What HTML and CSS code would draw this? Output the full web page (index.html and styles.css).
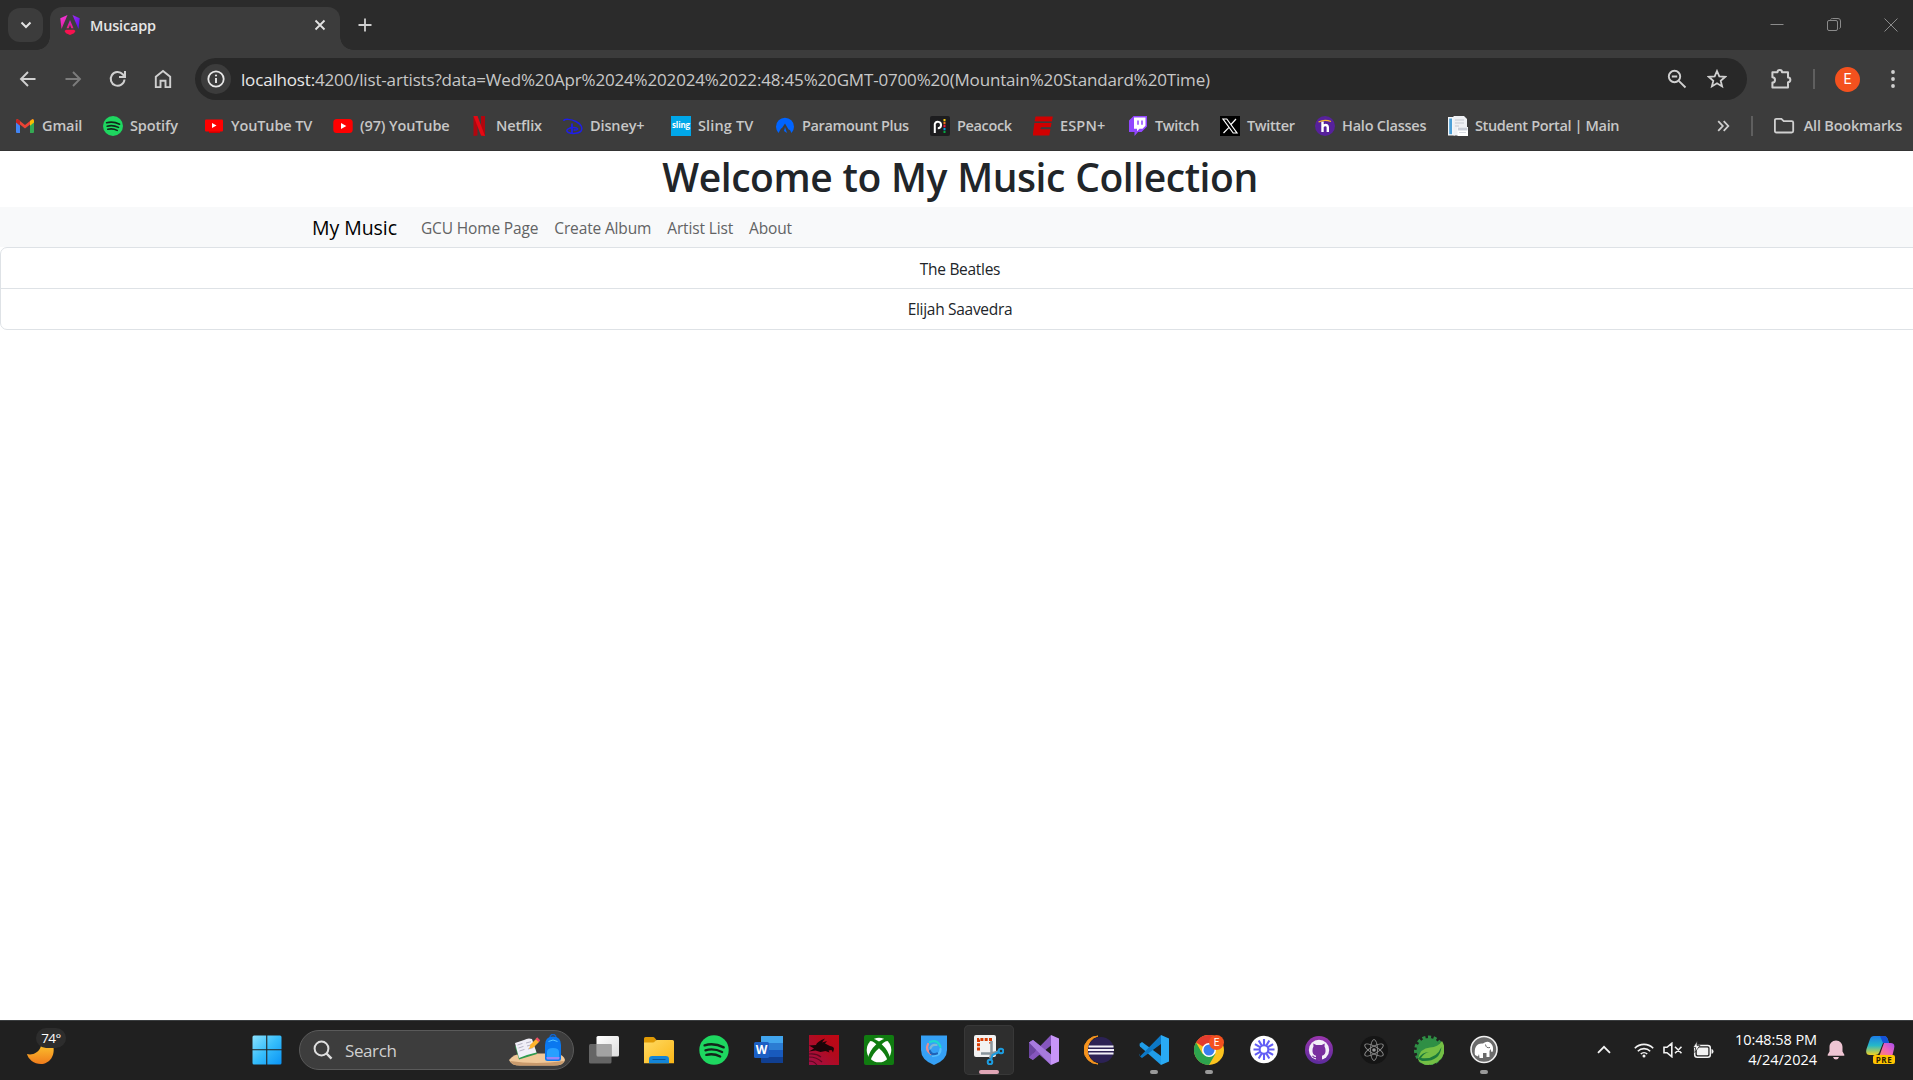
FILE: index.html
```html
<!DOCTYPE html>
<html lang="en">
<head>
<meta charset="utf-8">
<title>Musicapp</title>
<link rel="stylesheet" href="styles.css">
</head>
<body>
<div class="screen">
  <header class="browser">
    <div class="tab-strip">
      <div class="tab-search"><svg width="12" height="8" viewBox="0 0 12 8"><path d="M1.500 1.500 6 6l4.500-4.500" fill="none" stroke="#e3e3e3" stroke-width="2"/></svg></div>
      <div class="tab">
        <svg class="tab-icon" width="20" height="20" viewBox="0 0 20 20">
          <defs>
            <linearGradient id="ngL" x1="0" y1="0" x2="0.300" y2="1"><stop offset="0" stop-color="#f637e3"/><stop offset="1" stop-color="#e01f9b"/></linearGradient>
            <linearGradient id="ngR" x1="0" y1="0" x2="0.600" y2="1"><stop offset="0" stop-color="#a32cf0"/><stop offset="1" stop-color="#5c10f0"/></linearGradient>
            <linearGradient id="ngA" x1="0" y1="0" x2="0" y2="1"><stop offset="0" stop-color="#c31fd0"/><stop offset="1" stop-color="#f02080"/></linearGradient>
          </defs>
          <path d="M7.500 0 0.300 3.200 1.500 14 7.500 0Z" fill="url(#ngL)"/>
          <path d="M12.500 0 19.700 3.200 18.500 14Z" fill="url(#ngR)"/>
          <path d="M10 5 6.500 13.200H8.700L10 9.800 11.300 13.200H13.500Z" fill="url(#ngA)"/>
          <path d="M4.500 16 6 14.700H14L15.500 16 14 18.200 10 20 6 18.200Z" fill="#f8124f"/>
        </svg>
        <span class="tab-title">Musicapp</span>
        <svg width="12" height="12" viewBox="0 0 12 12"><path d="m1.500 1.500 9 9m0-9-9 9" stroke="#e3e3e3" stroke-width="1.800"/></svg>
      </div>
      <svg class="new-tab" width="14" height="14" viewBox="0 0 14 14"><path d="M7 .5v13M.5 7h13" stroke="#d0d0d0" stroke-width="1.800"/></svg>
      <div class="window-buttons">
        <svg width="14" height="14" viewBox="0 0 14 14"><path d="M.5 6.500h13" stroke="#8b8b8b"/></svg>
        <svg width="14" height="14" viewBox="0 0 14 14" fill="none" stroke="#8b8b8b"><rect x=".5" y="2.500" width="10" height="10" rx="1.500"/><path d="M3.500 1.500Q4 .5 5.500.5H11q2.500 0 2.500 2.500v6q0 1-1 1.500"/></svg>
        <svg width="14" height="14" viewBox="0 0 14 14"><path d="m.5.5 13 13m0-13-13 13" stroke="#8b8b8b"/></svg>
      </div>
    </div>

    <div class="toolbar">
      <div class="nav-buttons">
        <svg width="20" height="20" viewBox="0 0 20 20" fill="none" stroke="#d0d0d0" stroke-width="1.900"><path d="M17.500 10H3.500M10 3 3 10l7 7"/></svg>
        <svg width="20" height="20" viewBox="0 0 20 20" fill="none" stroke="#7c7c7c" stroke-width="1.900"><path d="M2.500 10h14M10 3l7 7-7 7"/></svg>
        <svg width="20" height="20" viewBox="0 0 20 20" fill="none" stroke="#d0d0d0" stroke-width="2"><path d="M16.500 10.500a6.900 6.900 0 1 1-1.800-5.300L16.800 7.500"/><path d="M17 2v6h-6"/></svg>
        <svg width="20" height="20" viewBox="0 0 20 20" fill="none" stroke="#d0d0d0" stroke-width="1.900"><path d="M2.800 7.700 10 1.900l7.200 5.800v10.400h-4.700v-6.300h-5v6.300H2.800Z"/></svg>
      </div>
      <div class="omnibox">
        <span class="site-info"><svg width="18" height="18" viewBox="0 0 18 18"><circle cx="9" cy="9" r="7.700" fill="none" stroke="#e8e8e8" stroke-width="1.800"/><path d="M9 8v5" stroke="#e8e8e8" stroke-width="1.900"/><circle cx="9" cy="5.500" r="1.100" fill="#e8e8e8"/></svg></span>
        <span class="url"><b>localhost:</b>4200/list-artists?data=Wed%20Apr%2024%202024%2022:48:45%20GMT-0700%20(Mountain%20Standard%20Time)</span>
        <svg class="zoom-out" width="20" height="20" viewBox="0 0 20 20" fill="none" stroke="#d0d0d0" stroke-width="1.900"><circle cx="7.500" cy="7.500" r="5.700"/><path d="m11.800 11.800 6.700 6.700M4.800 7.500h5.400"/></svg>
        <svg width="20" height="20" viewBox="0 0 20 20"><path d="m10 2 2.300 5.300 5.900.5-4.500 3.900 1.400 5.700-5.100-3.100-5.100 3.100 1.400-5.700-4.500-3.900 5.900-.5Z" fill="none" stroke="#d0d0d0" stroke-width="1.800"/></svg>
      </div>
      <svg class="extensions" width="22" height="22" viewBox="0 0 22 22"><path d="M2.400 4.200H7.500a2.200 2.200 0 0 1 4.500 0h6v5.300a2.300 2.300 0 0 1 0 4.700v5.400H2.400v-5.100a2.600 2.600 0 0 0 0-5.200Z" fill="none" stroke="#d0d0d0" stroke-width="2" stroke-linejoin="round"/></svg>
      <span class="divider"></span>
      <span class="avatar">E</span>
      <svg class="menu-dots" width="4" height="18" viewBox="0 0 4 18" fill="#d0d0d0"><circle cx="2" cy="2" r="1.900"/><circle cx="2" cy="9" r="1.900"/><circle cx="2" cy="16" r="1.900"/></svg>
    </div>

    <div class="bookmarks">
      <div class="bookmark-list">
        <div class="bookmark"><svg width="20" height="20" viewBox="0 0 20 20"><path d="M1 4v12q0 1 1 1h3V8Z" fill="#4285f4"/><path d="M19 4v12q0 1-1 1h-3V8Z" fill="#34a853"/><path d="M1 4.500Q1 3 2.500 3L10 9l7.500-6Q19 3 19 4.500L15 8.500l-5 4-5-4Z" fill="#ea4335"/><path d="M15 5 17.300 3.200Q19 3 19 5v1.500l-4 3.200Z" fill="#fbbc04"/><path d="M1 5q0-2 1.700-1.800L5 5v4.700L1 6.500Z" fill="#c5221f"/></svg><span>Gmail</span></div>
        <div class="bookmark"><svg width="20" height="20" viewBox="0 0 20 20"><use href="#spotify"/></svg><span>Spotify</span></div>
        <div class="bookmark"><svg width="20" height="20" viewBox="0 0 20 20"><path d="M5 15h11v2H5z" fill="#c00"/><rect x="1" y="3.500" width="18" height="12" rx="1" fill="#f00"/><path d="m8 7 4.500 2.500L8 12Z" fill="#fff"/></svg><span>YouTube TV</span></div>
        <div class="bookmark"><svg width="20" height="20" viewBox="0 0 20 20"><rect x=".3" y="3" width="19.400" height="14" rx="3.500" fill="#f00"/><path d="m8 7 5.300 3L8 13Z" fill="#fff"/></svg><span>(97) YouTube</span></div>
        <div class="bookmark"><svg width="20" height="20" viewBox="0 0 20 20"><path d="M4.500 0h4v19.500l-4 .5ZM12 0h4v20l-4-.5Z" fill="#b1060f"/><path d="M4.500 0h4L16 20l-4-.5Z" fill="#e50914"/></svg><span>Netflix</span></div>
        <div class="bookmark"><svg width="20" height="20" viewBox="0 0 20 20" fill="none" stroke="#1f1ee8" stroke-width="1.500"><path d="M.8 5C1 2.500 8 3 13 5.500c5 2.400 7 6.500 5 9.500-2 2.800-9 3-12.500 1.500-4-2 0-5 5-5 3 0 4.500 1 4 1.700-.7 1-4 .8-4 .8"/><path d="M9 7.500v10" stroke-width="1.800"/></svg><span>Disney+</span></div>
        <div class="bookmark"><span class="sling-icon">sling</span><span class="wide">Sling TV</span></div>
        <div class="bookmark"><svg width="20" height="20" viewBox="0 0 20 20"><path d="M3.500 17A9 9 0 1 1 16.500 17L15 14l-1.500-.5L10 7.500 7 12l-1 .5Z" fill="#0064ff"/><path d="m10 11 2 6-3-2Z" fill="#0064ff"/></svg><span class="tight">Paramount Plus</span></div>
        <div class="bookmark"><svg width="20" height="20" viewBox="0 0 20 20"><rect width="20" height="20" rx="2" fill="#1d1d1f"/><path d="M4.800 17V8a3.200 3.200 0 1 1 3 4.200" fill="none" stroke="#fff" stroke-width="2"/><path d="M13.500 3h2v2.300h-2z" fill="#fccc12"/><path d="M13.500 6h2v2.300h-2z" fill="#f37021"/><path d="M13.500 9h2v2.300h-2z" fill="#ef1541"/><path d="M13.500 12h2v2.300h-2z" fill="#069de0"/><path d="M13.500 15h2v2h-2z" fill="#05ac3f"/></svg><span class="tight">Peacock</span></div>
        <div class="bookmark"><svg width="20" height="20" viewBox="0 0 20 20" fill="#d00000"><path d="M2.500.5h17.300L18.900 5.500H1.600ZM1.400 7H18.500l-.7 4.200H8.200l-.3 2H17.400L16.300 19.500H-.3Z"/><path d="M1 6.300h18M7.500 12.400H18" stroke="#3c3c3c" stroke-width="1.300"/></svg><span class="wide">ESPN+</span></div>
        <div class="bookmark"><svg width="20" height="20" viewBox="0 0 20 20"><path d="M5.500 0H19v10.500L13.500 16H10l-3.500 4v-4H1V4.500Z" fill="#9146ff"/><path d="M6 1.500h11.500v8.300l-3 3h-3L9 15.300v-2.500H6Z" fill="#fff"/><path d="M10 4.500v4.300M14 4.500v4.300" stroke="#9146ff" stroke-width="1.500"/></svg><span class="tight">Twitch</span></div>
        <div class="bookmark"><svg width="20" height="20" viewBox="0 0 20 20"><path d="M0 0h20v20H0z" fill="#000"/><path d="M3 3h3.800L17 17h-3.800ZM16 3l-5.500 6M9 11.300 3.500 17" fill="none" stroke="#fff" stroke-width="1.200"/></svg><span class="tight">Twitter</span></div>
        <div class="bookmark"><svg width="20" height="20" viewBox="0 0 20 20"><circle cx="10" cy="10" r="10" fill="#57219c"/><path d="M7.500 5.500V16M7.500 11q1-2 3-2t2.300 2.200V16" fill="none" stroke="#fff" stroke-width="2.400"/><path d="M3.500 6Q9.500 3 16 5.500" fill="none" stroke="#f5b82e" stroke-width="1.300"/></svg><span class="snug">Halo Classes</span></div>
        <div class="bookmark"><svg width="20" height="20" viewBox="0 0 20 20"><path d="M0 1h7v18.500H0Z" fill="#f4f6f8"/><path d="M1.200 2.500H4v15.700H1.200Z" fill="#4c9fd6"/><path d="M5.500 0H16l3 3v16.500H5.500Z" fill="#eef0f4"/><path d="M7 4h9M7 7h9M7 10h4" stroke="#c4c8d0" stroke-width="1"/><path d="M9.500 11H20v9H9.500Z" fill="#fff"/><path d="M10 11.500h9.500v3H10Z" fill="#c9ced8"/><path d="M11 16.500h7" stroke="#d8dbe2"/></svg><span class="tight">Student Portal | Main</span></div>
      </div>
      <svg class="overflow" width="13" height="12" viewBox="0 0 13 12"><path d="m1.200 1.200 4.600 4.800-4.600 4.800m5.500-9.600L11.300 6l-4.600 4.800" fill="none" stroke="#d0d0d0" stroke-width="1.800"/></svg>
      <span class="divider"></span>
      <div class="bookmark all"><svg width="22" height="20" viewBox="0 0 22 20"><path d="M1.900 4.300q0-1.500 1.500-1.500h5l2.300 2.300h8q1.500 0 1.500 1.500V15q0 1.500-1.500 1.500H3.400Q1.900 16.500 1.900 15Z" fill="none" stroke="#d0d0d0" stroke-width="1.800"/></svg><span>All Bookmarks</span></div>
    </div>
  </header>

  <main class="page">
    <h1>Welcome to My Music Collection</h1>
    <nav class="navbar">
      <a class="brand">My Music</a>
      <a class="nav-link">GCU Home Page</a>
      <a class="nav-link">Create Album</a>
      <a class="nav-link">Artist List</a>
      <a class="nav-link">About</a>
    </nav>
    <ul class="artists">
      <li>The Beatles</li>
      <li>Elijah Saavedra</li>
    </ul>
  </main>

  <footer class="taskbar">
    <div class="weather">
      <svg width="30" height="30" viewBox="0 0 30 30"><defs><linearGradient id="moon" x1="0" y1="0" x2="0" y2="1"><stop offset="0" stop-color="#fbc02d"/><stop offset="1" stop-color="#f07c1c"/></linearGradient></defs><path d="M1 17c5 1.500 12-1 14-8l12-1c3 11-4 19-12 19C8 27 2 22 1 17Z" fill="url(#moon)"/></svg>
      <span class="temp">74°</span>
    </div>
    <div class="apps">
      <svg class="start" width="30" height="30" viewBox="0 0 30 30"><defs><linearGradient id="win" x1="0" y1="0" x2="1" y2="1"><stop offset="0" stop-color="#8be2ff"/><stop offset=".5" stop-color="#35bdfb"/><stop offset="1" stop-color="#0a93f5"/></linearGradient></defs><path d="M2 .5h12.200v13.700H.5V2Q.5.500 2 .5ZM15.300.5H28q1.500 0 1.500 1.500v12.200H15.300ZM.5 15.300h13.700v14.200H2Q.5 29.500.5 28ZM15.300 15.300h14.200V28q0 1.500-1.500 1.500H15.300Z" fill="url(#win)"/></svg>
      <div class="search">
        <svg width="20" height="20" viewBox="0 0 20 20" fill="none" stroke="#dedede" stroke-width="2"><circle cx="8.500" cy="8.500" r="6.900"/><path d="m13.500 13.500 5 5.200" stroke-width="2.400"/></svg>
        <span>Search</span>
        <svg class="search-art" width="58" height="32" viewBox="0 0 58 32"><path d="M1 26Q6 19.500 15 19.500H49Q56 21 57 26 56 31.500 46 31.500H12Q3 31.500 1 26Z" fill="#f0c899"/><path d="M2 27q26 4 54 0-2 4.500-10 4.500H12Q4 31.500 2 27Z" fill="#c99a6c"/><path d="m7 12 4 13.500 18-5.500-1.500-5Z" fill="#2e9b4f"/><path d="m7 9 9-3 3 15-8 3ZM16 6q4-2.500 8-1l4.500 13.500-9.500 2.500Z" fill="#f1eff8"/><path d="m9.500 11 5-1.600m-4 4.600 5-1.600m-4 4.600 5-1.600M18 9l5-1.300M19 12l5-1.300M20 15l5-1.300" stroke="#b5b3c4"/><path d="m21 15 1.500-4.500 6-6 3 3-6 6Z" fill="#ffb42e"/><path d="m27.500 5 1.700-1.700 3 3-1.700 1.700Z" fill="#ef4f67"/><path d="M42 4q0-3.500 3-3.500T48 4" fill="none" stroke="#1262c9" stroke-width="1.500"/><path d="M37 11q0-8.500 8-8.500t8 8.500v14q0 2-2.500 2h-11q-2.500 0-2.500-2Z" fill="#0a78f0"/><path d="M39 18q0-4 6-4t6 4v5H39Z" fill="#27a0ff"/><path d="M38.500 23h13v1q0 1.500-1.500 1.500H40q-1.500 0-1.500-1.500Z" fill="#9a86f6"/><path d="M40.500 7.500q4.500-3 9 0" fill="none" stroke="#55c4ff"/></svg>
      </div>

      <div class="app"><svg viewBox="0 0 30 30"><defs><linearGradient id="tv" x1="0" y1="0" x2="1" y2="1"><stop offset="0" stop-color="#fff"/><stop offset="1" stop-color="#dcdcdc"/></linearGradient></defs><rect x="7.500" y="1" width="22.500" height="20.500" rx="1.500" fill="url(#tv)"/><rect x="0" y="9" width="22.500" height="19.500" rx="1.500" fill="#6d6d6d" fill-opacity=".9"/><path d="M7.500 9h15v12.500H9q-1.500 0-1.500-1.500Z" fill="#a3a3a3"/></svg></div>
      <div class="app"><svg viewBox="0 0 30 30"><defs><linearGradient id="fold" x1="0" y1="0" x2="1" y2="1"><stop offset="0" stop-color="#ffda63"/><stop offset="1" stop-color="#fbb616"/></linearGradient></defs><path d="M0 3.500Q0 2 1.500 2H9q1 0 2 1.200L12.500 5 10 8H0Z" fill="#e09a05"/><path d="M0 7.500h9q1 0 2-1.200T13 5h15.500Q30 5 30 6.500V28.300H0Z" fill="url(#fold)"/><path d="M5 28.300v-4q0-3.300 3.300-3.300h13.400q3.300 0 3.300 3.300v4Z" fill="#1385d8"/><path d="M8.500 24.500h13" stroke="#0a5596"/></svg></div>
      <div class="app"><svg viewBox="0 0 30 30"><g transform="translate(.3 .3) scale(1.470)"><g id="spotify"><circle cx="10" cy="10" r="10" fill="#1ed760"/><path d="M3.600 6.800q6.400-1.900 13 1.400M4.200 10.200q5.700-1.600 11.300 1.200M4.800 13.300q5-1.200 9.400 1.100" fill="none" stroke="#12261a" stroke-width="1.600" stroke-linecap="round"/></g></g></svg></div>
      <div class="app"><svg viewBox="0 0 30 30"><path d="M7 1.500q0-.5.500-.5H29v7.500H7Z" fill="#41a5ee"/><path d="M7 8h22v7H7Z" fill="#2b7cd3"/><path d="M7 15h22v7H7Z" fill="#185abd"/><path d="M7 22h22v6H8q-1 0-1-1Z" fill="#103f91"/><rect x="0" y="7" width="15" height="16" rx="1.500" fill="#1b5fc4"/><text x="7.500" y="19.200" text-anchor="middle" class="word-letter">W</text></svg></div>
      <div class="app"><svg viewBox="0 0 30 30"><defs><linearGradient id="drg" x1="0" y1="1" x2="1" y2="0"><stop offset="0" stop-color="#a0104a"/><stop offset=".6" stop-color="#b20a1c"/><stop offset="1" stop-color="#c00612"/></linearGradient></defs><path d="M0 0h30v30H0z" fill="url(#drg)"/><path d="M0 10.500 7 10q1-3.500 9-6.500l-3 4 5-1.500-2 2.500 5 2.500q4 .5 4 3l-1 3.500-1.500-2.500-3 .5 1 2-4-1.500-5 1-5-1.500L0 16.500l5-3Z" fill="#1a0508"/><path d="M0 19q7-1 12 3M0 22q8 0 13 5M0 26q5 0 8 4" fill="none" stroke="#5c0820" stroke-width="1.200"/></svg></div>
      <div class="app"><svg viewBox="0 0 30 30"><rect width="30" height="30" rx="2" fill="#107c10"/><circle cx="15" cy="15" r="12.300" fill="#fff"/><path d="M5 4Q9 2.500 15 6.500 21 2.500 25 4l2.500 2Q22 5 17.700 9.200 25 16 26 23.500L23.500 26Q22 19 15 13.200 8 19 6.500 26L4 23.500Q5 16 12.300 9.200 8 5 2.500 6Z" fill="#107c10"/></svg></div>
      <div class="app"><svg viewBox="0 0 30 30"><path d="M2 .5h26V15q0 10-13 15Q2 25 2 15Z" fill="#35a0f5"/><g fill="none" stroke-width="2.200" stroke-linecap="round"><path d="M11 7q8-3 10.500 5" stroke="#1ed8d0"/><path d="M9 9q-3 6 3 10" stroke="#e58f8f"/><path d="M14 21q8-1 7.500-7" stroke="#55c0ff"/><path d="M11 16q1 4.500 7 2.500" stroke="#1f63b8"/><path d="M11.500 13q1.500-4 6-3" stroke="#7db8d8"/></g></svg></div>
      <div class="app active"><svg viewBox="0 0 30 30"><rect width="22" height="22" rx="2" fill="#f2f2f2"/><path d="M4.500 15.500v-11h12v4" fill="none" stroke="#d83b01" stroke-width="3" stroke-dasharray="3 1.300"/><path d="M17.500 6v12.500l-1.500 5M7 18.500h10l8-2" fill="none" stroke="#8a959c" stroke-width="2.500"/><g fill="none" stroke="#1d9de0" stroke-width="2"><circle cx="16" cy="27" r="2.300"/><circle cx="27" cy="16" r="2.300"/><path d="m17 25 1.500-5 6.500-3"/></g></svg></div>
      <div class="app"><svg viewBox="0 0 30 30"><path d="M0 7.500 4 5l18 14.500V30L4 14v11L0 22.500Z" fill="#8656be"/><path d="M0 7.500 4 5l4.500 9L0 22.500Z" fill="#6c45a0"/><path d="M0 22.500 22 0v10.500L4 25Z" fill="#8656be"/><path d="M0 7.500 4 5l18 14.500V30Z" fill="#a77ade"/><path d="M22 0l8 3.500v23L22 30Z" fill="#c895f8"/></svg></div>
      <div class="app"><svg viewBox="0 0 30 30"><path d="M14 1A14 14 0 0 0 14 29 14.500 14.500 0 0 1 14 1Z" fill="#f7941e" stroke="#f7941e"/><circle cx="17" cy="15" r="13" fill="#2c2255"/><path d="M4.500 11.500h25M4 15h26M4.500 18.500h25" stroke="#f2f0f8" stroke-width="1.900"/></svg></div>
      <div class="app running"><svg viewBox="0 0 30 30"><path d="M1 8.500 3 7l19 14v9L1 11.500Q0 10 1 8.500Z" fill="#1f9ce8"/><path d="M1 21.500 22 0v9L3 23l-2-1.500Q0 20 1 18.500Z" fill="#0d78c6"/><path d="M22 0l8 3.500v23L22 30Z" fill="#29aaf4"/></svg></div>
      <div class="app running"><svg viewBox="0 0 30 30"><circle cx="15" cy="15" r="15" fill="#fcc31e"/><path d="M15 15 2 7.500A15 15 0 0 1 28 7.500H15Z" fill="#e33b2e"/><path d="M2 7.500A15 15 0 0 0 15 30l6.500-11.200L15 15l-6.500 3.700Z" fill="#2da44e"/><circle cx="15" cy="15" r="7" fill="#fff"/><circle cx="15" cy="15" r="5.500" fill="#3a7df0"/><circle cx="22.500" cy="7.500" r="7.500" fill="#f4511e"/><text x="22.500" y="11" text-anchor="middle" class="badge-letter">E</text></svg></div>
      <div class="app"><svg viewBox="0 0 30 30"><circle cx="15" cy="14.500" r="13.800" fill="#fff"/><path d="M15 4v6M15 19v6M4.500 14.500h6M19.500 14.500h6M9.700 5.400l3 5.200M17.300 18.400l3 5.200M5.900 9.200l5.200 3M18.900 16.800l5.200 3M5.900 19.800l5.200-3M18.900 12.200l5.200-3M9.700 23.600l3-5.200M17.300 10.600l3-5.200" stroke="#625df5" stroke-width="2.100"/><circle cx="15" cy="14.500" r="4.300" fill="none" stroke="#625df5" stroke-width="2"/></svg></div>
      <div class="app"><svg viewBox="0 0 30 30"><defs><linearGradient id="gh" x1="0" y1="0" x2="0" y2="1"><stop offset="0" stop-color="#9a36ae"/><stop offset="1" stop-color="#5b2b9b"/></linearGradient></defs><circle cx="15" cy="15" r="14" fill="url(#gh)"/><circle cx="15" cy="15" r="10.200" fill="#f3eff8"/><path d="M12 25.500v-4.700Q8 19.500 8.500 15q0-2 1-3.500L9.300 8.500 12.300 10h5.400l3-1.500-.2 3q1 1.500 1 3.500.5 4.500-3.500 5.800v4.700Z" fill="#7a2f9f"/><path d="M12 22.500q-2.500.5-3.500-1.700" fill="none" stroke="#7a2f9f" stroke-width="1.200"/></svg></div>
      <div class="app"><svg viewBox="0 0 30 30"><circle cx="15" cy="15" r="14" fill="#151515"/><g fill="none" stroke="#8e8e8e" stroke-width=".9"><ellipse cx="15" cy="15" rx="3.500" ry="10.500"/><ellipse cx="15" cy="15" rx="3.500" ry="10.500" transform="rotate(60 15 15)"/><ellipse cx="15" cy="15" rx="3.500" ry="10.500" transform="rotate(120 15 15)"/></g><circle cx="15" cy="15" r="1.800" fill="#999"/></svg></div>
      <div class="app"><svg viewBox="0 0 30 30"><circle cx="15" cy="15.500" r="12.500" fill="#2f8f45"/><circle cx="15" cy="15.500" r="13.500" fill="none" stroke="#2f8f45" stroke-width="3" stroke-dasharray="3.200 2.450"/><path d="M28 6q6 10-2 19-8 7-17 4-5-3-5-5Q6 13 16 12.500 24 12 28 6Z" fill="#74bf45"/><path d="M4 24Q8 17 15 17q-5 1-8 6 15 2 20.500-11Q26 27 8 26Z" fill="#1c7a3b"/></svg></div>
      <div class="app running"><svg viewBox="0 0 30 30"><circle cx="15" cy="14.500" r="13" fill="#6b6b6b" stroke="#f0f0f0" stroke-width="1.600"/><path d="M6 20q-1-5 1-8.500Q9 8 14 8.500q4-3 7.500-.5 3 2.500 2.500 7 0 2.500-1.500 2l-1-3-1 2V22h-3v-4h-3.500v5H10.500l-.5-4-1 2.500Z" fill="#fff"/><path d="M16.500 9.500q.5 4 4.500 3" fill="none" stroke="#6b6b6b"/></svg></div>
    </div>
    <div class="tray">
      <svg width="14" height="9" viewBox="0 0 14 9"><path d="m1 7.800 6-6 6 6" fill="none" stroke="#f2f2f2" stroke-width="1.800"/></svg>
      <svg class="wifi" width="20" height="16" viewBox="0 0 20 16" fill="none" stroke="#f2f2f2" stroke-width="1.600"><path d="M.8 6.200a13 13 0 0 1 18.400 0M3.800 9.200a8.800 8.800 0 0 1 12.400 0M6.800 12a4.600 4.600 0 0 1 6.400 0"/><circle cx="10" cy="14" r="1.500" fill="#f2f2f2" stroke="none"/></svg>
      <svg class="volume" width="20" height="16" viewBox="0 0 20 16" fill="none" stroke="#f2f2f2" stroke-width="1.600"><path d="M1 5.300h3L8.800 1.300v13.400L4 10.700H1ZM12 4.800l6.500 6.500m0-6.500L12 11.300"/></svg>
      <svg class="battery" width="21" height="18" viewBox="0 0 21 18"><rect x="1.700" y="4.500" width="15.600" height="11.800" rx="2.500" fill="none" stroke="#f2f2f2" stroke-width="1.500"/><rect x="3.800" y="6.500" width="11.500" height="7.800" rx="1" fill="#f2f2f2"/><path d="M18.500 8q2 .2 2 2.400t-2 2.400Z" fill="#f2f2f2"/><path d="M4.200 0 0 6.500h2.700L1.800 11.500 7 4.500H4Z" fill="#f2f2f2" stroke="#202020" stroke-width=".7"/></svg>
      <div class="clock"><span class="time">10:48:58 PM</span><span class="date">4/24/2024</span></div>
      <svg class="bell" width="18" height="20" viewBox="0 0 18 20" fill="#efc5d3"><path d="M9 .5c4 0 6.500 3 6.500 6.500v4.500l2 3.500q0 .8-.8.800H1.300q-.8 0-.8-.8l2-3.500V7C2.500 3.500 5 .5 9 .5ZM6 17h6q-.8 2.500-3 2.500T6 17Z"/></svg>
      <div class="copilot">
        <svg width="30" height="28" viewBox="0 0 30 28"><defs><linearGradient id="cpA" x1="0" y1="0" x2="0" y2="1"><stop offset="0" stop-color="#1c7de8"/><stop offset=".5" stop-color="#25b8c8"/><stop offset="1" stop-color="#f3d321"/></linearGradient><linearGradient id="cpB" x1="1" y1="0" x2="0" y2="1"><stop offset="0" stop-color="#a64df0"/><stop offset=".5" stop-color="#f065b8"/><stop offset="1" stop-color="#ff8a5c"/></linearGradient></defs><path d="M8 0h10q3 0 4 4l1 3h-6l-4 10q-1 2-4 2H4q-5 0-3.500-6L4 3Q5 0 8 0Z" fill="url(#cpA)"/><path d="M14 0h4q3 0 4 4l1 3h-6Z" fill="#1552d8"/><path d="M18 7h7q4.500 0 3 6l-2 8H13Z" fill="url(#cpB)"/></svg>
        <span class="pre">PRE</span>
      </div>
    </div>
  </footer>
</div>
</body>
</html>
```
FILE: styles.css
```css
* { box-sizing: border-box; }

body {
  margin: 0;
  overflow: hidden;
  font-family: "Open Sans", "Noto Sans", sans-serif;
}

svg { display: block; flex: none; }

.screen {
  width: 1913px;
  height: 1080px;
  overflow: hidden;
  display: flex;
  flex-direction: column;
  background: #fff;
}

/* Browser chrome */
.browser {
  height: 151px;
  background: #3c3c3c;
  border-bottom: 1px solid #343434;
}

.tab-strip {
  height: 50px;
  padding-left: 8px;
  display: flex;
  align-items: flex-start;
  background: #2b2b2b;
}

.tab-search {
  width: 35px;
  height: 34px;
  margin-top: 8px;
  border-radius: 12px;
  background: #3c3c3c;
  display: flex;
  align-items: center;
  justify-content: center;
}

.tab {
  position: relative;
  width: 290px;
  height: 43px;
  margin: 7px 0 0 7px;
  padding: 0 14px 7px 10px;
  border-radius: 12px 12px 0 0;
  background: #3c3c3c;
  display: flex;
  align-items: center;
}

.tab::before,
.tab::after {
  content: "";
  position: absolute;
  bottom: 0;
  width: 13px;
  height: 13px;
}

.tab::before {
  left: -13px;
  background: radial-gradient(circle at 0 0, transparent 12.500px, #3c3c3c 13px);
}

.tab::after {
  right: -13px;
  background: radial-gradient(circle at 100% 0, transparent 12.500px, #3c3c3c 13px);
}

.tab-title {
  flex: 1;
  margin-left: 10px;
  padding-top: 1px;
  font-size: 14.500px;
  font-weight: 600;
  letter-spacing: -0.170px;
  line-height: 20px;
  color: #e6e6e6;
}

.new-tab { margin: 18px 0 0 18px; }

.window-buttons {
  margin: 18px 15px 0 auto;
  display: flex;
  gap: 43px;
}

.toolbar {
  height: 50px;
  padding-top: 8px;
  display: flex;
  align-items: center;
}

.nav-buttons {
  width: 195px;
  padding-left: 18px;
  display: flex;
  gap: 25px;
}

.omnibox {
  width: 1552px;
  height: 42px;
  padding: 0 20px 0 6px;
  border-radius: 21px;
  background: #282828;
  display: flex;
  align-items: center;
}

.site-info {
  width: 30px;
  height: 30px;
  border-radius: 50%;
  background: #3c3c3c;
  display: flex;
  align-items: center;
  justify-content: center;
}

.url {
  flex: 1;
  margin-left: 10px;
  padding-top: 1px;
  font-size: 17px;
  line-height: 24px;
  letter-spacing: -0.170px;
  color: #c7c7c7;
}

.url b { font-weight: 400; color: #e8e8e8; }

.zoom-out { margin-right: 20px; }

.extensions { margin-left: 23px; }

.divider {
  width: 2px;
  height: 20px;
  background: #5f5f5f;
}

.toolbar .divider { margin-left: 21px; }

.avatar {
  width: 25px;
  height: 25px;
  margin-left: 20px;
  border-radius: 50%;
  background: #f4511e;
  color: #fff;
  font: 400 14px/25px Roboto, sans-serif;
  text-align: center;
}

.menu-dots { margin-left: 31px; }

.bookmarks {
  height: 50px;
  padding: 2px 11px 0 15px;
  display: flex;
  align-items: center;
}

.bookmark-list {
  display: grid;
  grid-template-columns: 88px 101px 129px 136px 94px 108px 104px 155px 103px 95px 92px 95px 133px auto;
}

.bookmark {
  display: flex;
  align-items: center;
  gap: 7px;
  font-size: 14.500px;
  font-weight: 600;
  letter-spacing: -0.120px;
  line-height: 20px;
  white-space: nowrap;
  color: #c7c7c7;
}

.bookmark .tight { letter-spacing: -0.360px; }
.bookmark .snug { letter-spacing: -0.240px; }
.bookmark .wide { letter-spacing: 0.150px; }

.sling-icon {
  width: 20px;
  height: 20px;
  background: #00a7e9;
  color: #fff;
  font-size: 8px;
  font-weight: 700;
  line-height: 18px;
  text-align: center;
}

.overflow { margin-left: auto; }
.bookmarks .divider { margin: 0 20px 0 21px; }
.bookmark.all { gap: 9px; letter-spacing: -0.200px; }

.page {
  flex: 1;
  width: 1920px;
  background: #fff;
  color: #212529;
}

h1 {
  margin: 0;
  height: 56px;
  padding-top: 2px;
  font-size: 39px;
  font-weight: 600;
  line-height: 48px;
  letter-spacing: -0.450px;
  word-spacing: 0.600px;
  text-align: center;
}

.navbar {
  height: 40px;
  padding-left: 312px;
  display: flex;
  align-items: center;
  background: #f8f9fa;
  font-size: 15.500px;
}

.brand {
  width: 101px;
  font-size: 19.500px;
  letter-spacing: -0.050px;
  color: #000;
}

.nav-link {
  padding: 1px 8px 0;
  letter-spacing: -0.150px;
  color: #626364;
}

.artists {
  list-style: none;
  margin: 0;
  padding: 0;
  border: 1px solid #dee2e6;
  border-radius: 7px;
}

.artists li {
  height: 40px;
  padding-top: 1px;
  font-size: 15.500px;
  line-height: 40px;
  letter-spacing: -0.300px;
  text-align: center;
}

.artists li + li { height: 41px; padding-top: 0; border-top: 1px solid #dee2e6; }

/* Taskbar */
.taskbar {
  height: 60px;
  border-top: 1px solid #3a3d3f;
  background: #202020;
  display: flex;
}

.weather {
  position: relative;
  width: 252px;
  padding: 16px 0 0 26px;
}

.temp {
  position: absolute;
  left: 36px;
  top: 7px;
  width: 30px;
  height: 20px;
  border-radius: 10px;
  background: #2d2d2d;
  color: #fff;
  font-size: 13.500px;
  line-height: 20px;
  letter-spacing: -0.500px;
  text-align: center;
}

.apps { display: flex; padding-top: 4px; }

.start { margin-top: 10px; }

.search {
  width: 275px;
  height: 40px;
  margin: 5px 5px 0 17px;
  padding: 0 7px 0 13px;
  border: 1px solid #5a5a5a;
  border-radius: 20px;
  background: #3d3d3d;
  display: flex;
  align-items: center;
  color: #d0d0d0;
  font-size: 17px;
  letter-spacing: -0.400px;
}

.search span { margin-left: 12px; }
.search-art { margin-left: auto; }

.app {
  position: relative;
  width: 50px;
  height: 50px;
  margin-right: 5px;
  border-radius: 5px;
  display: flex;
  align-items: center;
  justify-content: center;
}

.app svg { width: 30px; height: 30px; }

.app.active {
  background: #2e2e2e;
  box-shadow: inset 0 0 0 1px #383838;
}

.app.active::after,
.app.running::after {
  content: "";
  position: absolute;
  bottom: 1px;
  width: 8px;
  height: 4px;
  border-radius: 2px;
  background: #9a9a9a;
}

.app.active::after { width: 20px; background: #e0a6b6; }

.word-letter { font: 700 12px "Open Sans", sans-serif; fill: #fff; }
.badge-letter { font: 400 10px Roboto, sans-serif; fill: #fff; }

.tray {
  margin-left: auto;
  padding: 0 17px 2px 0;
  display: flex;
  align-items: center;
}

.wifi { margin-left: 23px; }
.volume { margin-left: 9px; }
.battery { margin-left: 10px; }

.clock {
  width: 103px;
  display: flex;
  flex-direction: column;
  align-items: flex-end;
  color: #fff;
  font-size: 14.500px;
  line-height: 20px;
}

.time { letter-spacing: -0.080px; }
.bell { margin-left: 10px; }

.copilot { position: relative; margin-left: 21px; }

.pre {
  position: absolute;
  left: 7px;
  bottom: 0;
  width: 22px;
  height: 9px;
  border-radius: 2px;
  background: #ffc400;
  color: #2b2100;
  font-size: 8px;
  font-weight: 700;
  line-height: 9px;
  letter-spacing: 0.500px;
  text-align: center;
}
```
